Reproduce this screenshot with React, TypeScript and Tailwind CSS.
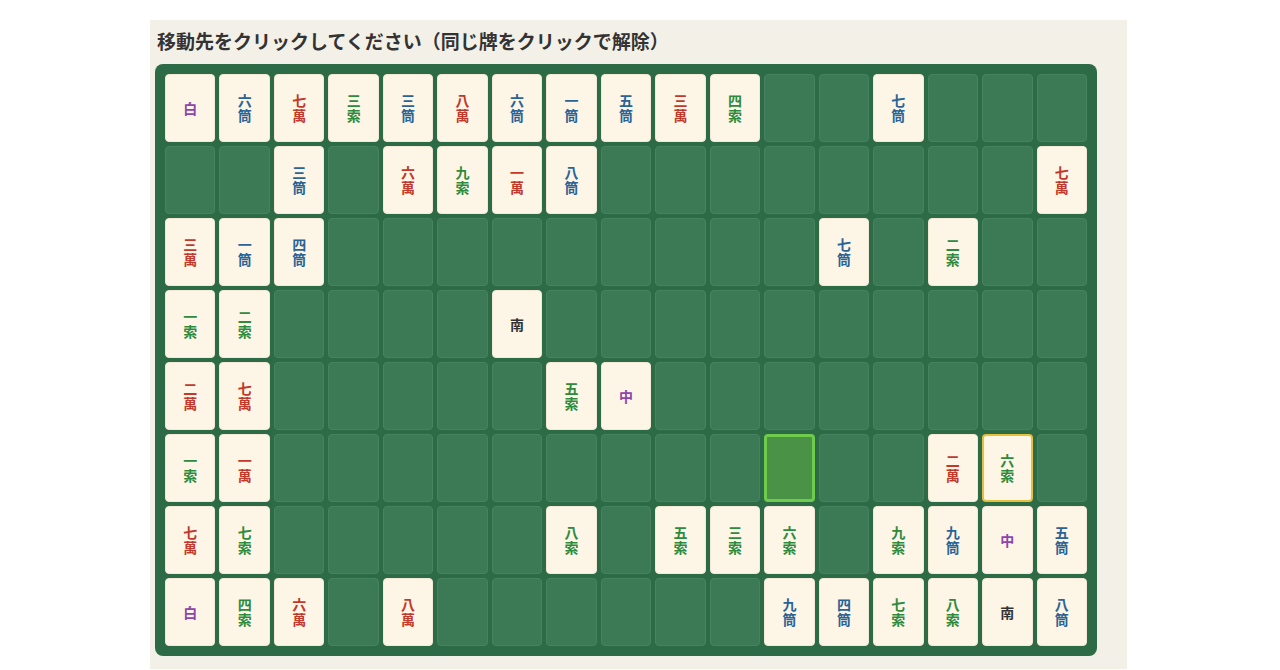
import React from 'react';

type Tile = string | null;

// 各行17マス。"六筒" のように数字+種類、字牌は1文字
const board: Tile[][] = [
    ['白', '六筒', '七萬', '三索', '三筒', '八萬', '六筒', '一筒', '五筒', '三萬', '四索', null, null, '七筒', null, null, null],
    [null, null, '三筒', null, '六萬', '九索', '一萬', '八筒', null, null, null, null, null, null, null, null, '七萬'],
    ['三萬', '一筒', '四筒', null, null, null, null, null, null, null, null, null, '七筒', null, '二索', null, null],
    ['一索', '二索', null, null, null, null, '南', null, null, null, null, null, null, null, null, null, null],
    ['二萬', '七萬', null, null, null, null, null, '五索', '中', null, null, null, null, null, null, null, null],
    ['一索', '一萬', null, null, null, null, null, null, null, null, null, null, null, null, '二萬', '六索', null],
    ['七萬', '七索', null, null, null, null, null, '八索', null, '五索', '三索', '六索', null, '九索', '九筒', '中', '五筒'],
    ['白', '四索', '六萬', null, '八萬', null, null, null, null, null, null, '九筒', '四筒', '七索', '八索', '南', '八筒'],
];

const targetCell = { r: 5, c: 11 };
const selectedCell = { r: 5, c: 15 };

const tileColor = (t: string) => {
    if (t.endsWith('萬')) return 'text-[#c0392b]';
    if (t.endsWith('筒')) return 'text-[#2a6496]';
    if (t.endsWith('索')) return 'text-[#2e8b3e]';
    if (t === '南') return 'text-[#333333]';
    return 'text-[#8e44ad]';
};

const TileFace: React.FC<{ tile: string; selected: boolean }> = ({ tile, selected }) => (
    <div
        className={`h-full rounded-[4px] bg-[#fdf5e6] flex flex-col items-center justify-center font-bold text-[14px] leading-[15px] ${tileColor(tile)} ${
            selected ? 'border-2 border-[#e6bf3c]' : 'border border-[#f3e9d6]'
        }`}
    >
        {tile.length === 2 ? (
            <>
                <span>{tile[0]}</span>
                <span>{tile[1]}</span>
            </>
        ) : (
            <span>{tile}</span>
        )}
    </div>
);

export default function App() {
    return (
        <div className="min-h-screen bg-white" style={{ fontFamily: '"Noto Sans CJK JP", "Noto Sans", sans-serif' }}>
            <div className="ml-[150px] mt-[20px] w-[977px] bg-[#f3f0e8] px-[5px] pt-[8px] pb-[13px]">
                <h2 className="text-[19px] leading-[26px] font-bold text-[#333333] mb-[10px] pl-[2px]">
                    移動先をクリックしてください（同じ牌をクリックで解除）
                </h2>
                <div className="w-[942px] rounded-lg bg-[#2d6b47] p-[10px] grid grid-cols-[repeat(17,minmax(0,1fr))] auto-rows-[68px] gap-1">
                    {board.map((row, r) =>
                        row.map((tile, c) => {
                            const isTarget = r === targetCell.r && c === targetCell.c;
                            const isSelected = r === selectedCell.r && c === selectedCell.c;
                            if (tile) {
                                return <TileFace key={`${r}-${c}`} tile={tile} selected={isSelected} />;
                            }
                            return (
                                <div
                                    key={`${r}-${c}`}
                                    className={
                                        isTarget
                                            ? 'rounded-[4px] bg-[#4a9245] border-[3px] border-[#6fcb4c]'
                                            : 'rounded-[4px] bg-[#3c7a55] border border-[#47835e]'
                                    }
                                />
                            );
                        })
                    )}
                </div>
            </div>
        </div>
    );
}
